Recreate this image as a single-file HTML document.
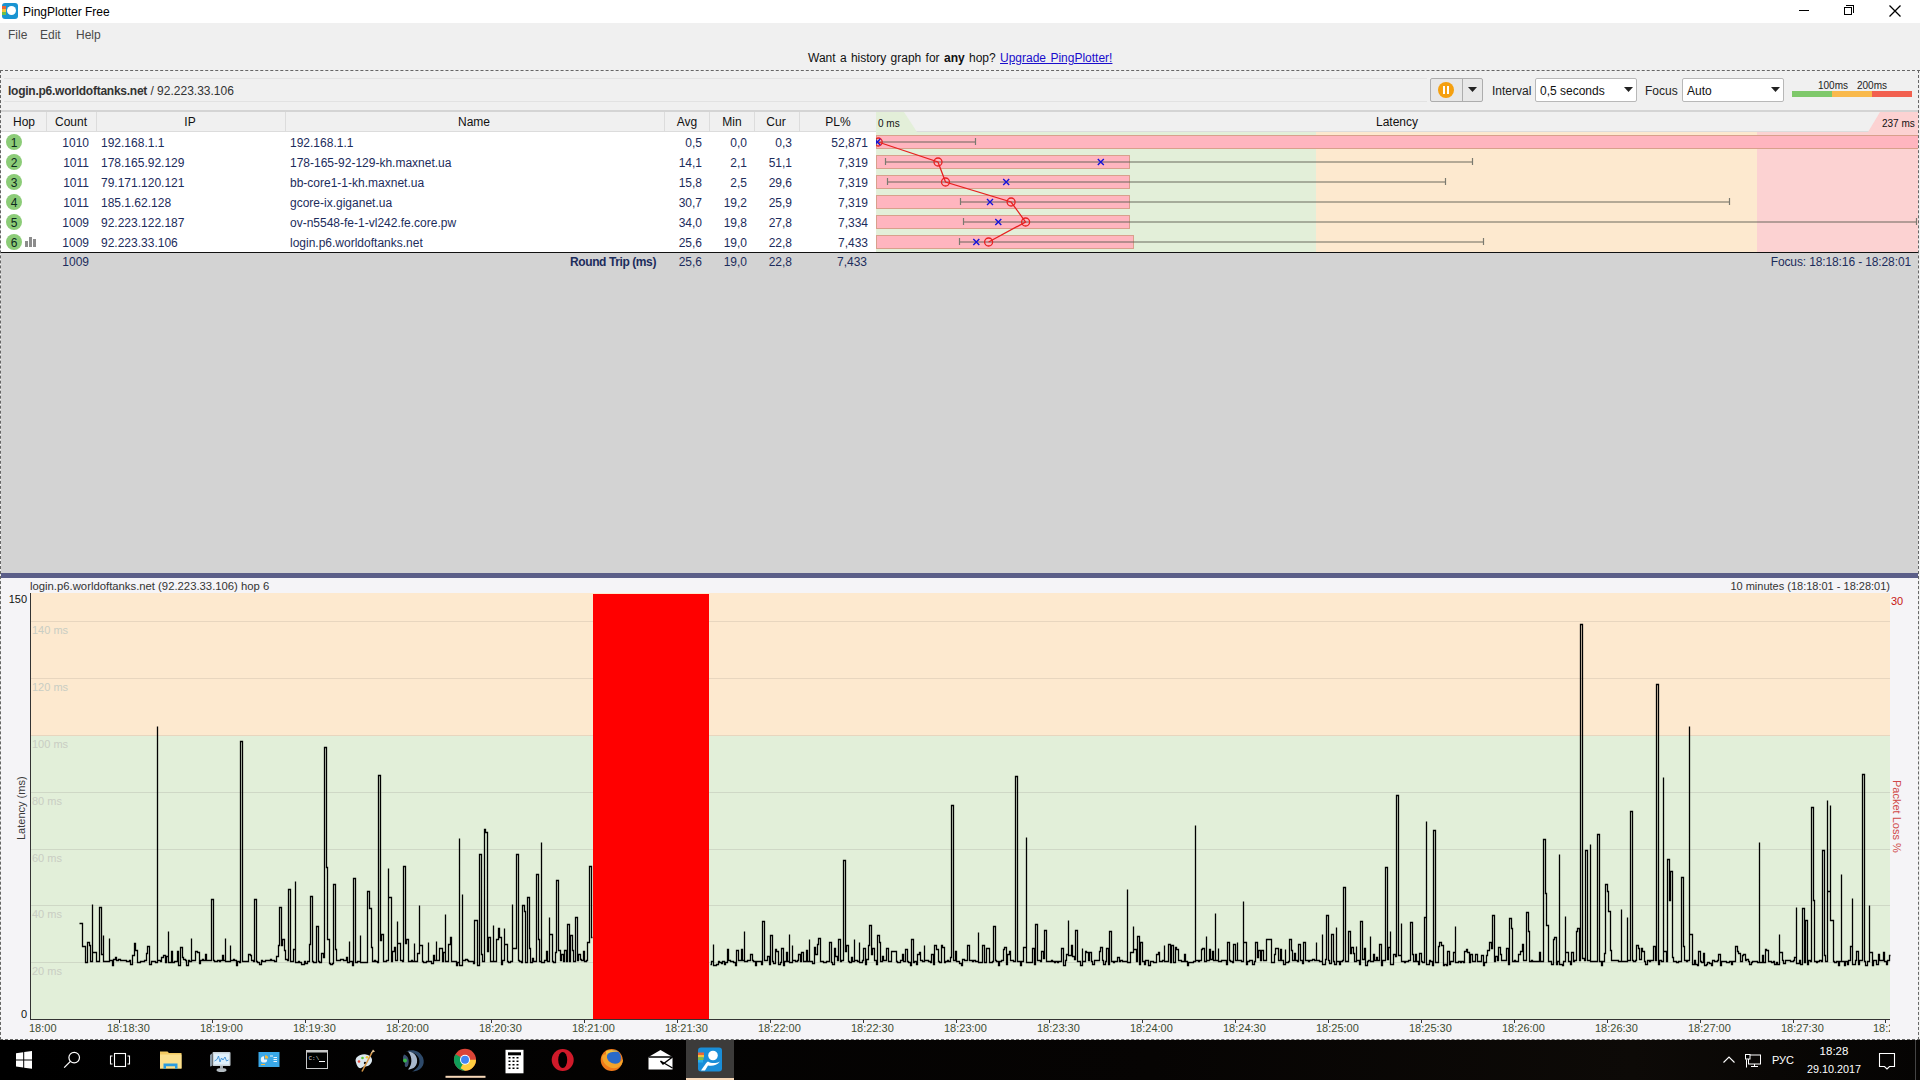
<!DOCTYPE html><html><head><meta charset="utf-8"><style>
*{margin:0;padding:0;box-sizing:border-box}
html,body{width:1920px;height:1080px;overflow:hidden;background:#f0f0f0;font-family:"Liberation Sans",sans-serif;font-size:12px;color:#000}
.a{position:absolute;white-space:nowrap}
.t{position:absolute;white-space:nowrap;line-height:14px}
.nv{color:#1c2c5c}
.r{text-align:right}
.c{text-align:center}
</style></head><body><div class="a" style="left:0;top:0;width:1920px;height:23px;background:#fff"></div><div class="a" style="left:2px;top:3px;width:16px;height:16px;border-radius:3px;background:#1a94d2;overflow:hidden"><div class="a" style="left:0;top:3px;width:4px;height:3px;background:#e8663a"></div><div class="a" style="left:0;top:6px;width:4px;height:3px;background:#f6c43a"></div><div class="a" style="left:0;top:9px;width:4px;height:3px;background:#6cbf4a"></div><div class="a" style="left:5px;top:3px;width:9px;height:9px;border-radius:50%;background:#fff"></div></div><div class="t" style="left:23px;top:5px;font-size:12px;color:#000">PingPlotter Free</div><div class="a" style="left:1799px;top:10px;width:10px;height:1px;background:#000"></div><div class="a" style="left:1844px;top:7px;width:8px;height:8px;border:1px solid #000;background:#fff"></div><div class="a" style="left:1846px;top:5px;width:8px;height:8px;border-top:1px solid #000;border-right:1px solid #000"></div><svg class="a" style="left:1889px;top:5px" width="12" height="12"><path d="M0.5 0.5L11.5 11.5M11.5 0.5L0.5 11.5" stroke="#000" stroke-width="1.3"/></svg><div class="t" style="left:8px;top:28px;color:#4a4a4a">File</div><div class="t" style="left:40px;top:28px;color:#4a4a4a">Edit</div><div class="t" style="left:76px;top:28px;color:#4a4a4a">Help</div><div class="t" style="left:808px;top:51px;color:#111;word-spacing:1px">Want a history graph for <b>any</b> hop? <span style="color:#1a0dcc;text-decoration:underline">Upgrade PingPlotter!</span></div><div class="a" style="left:0;top:70px;width:1920px;height:1px;border-top:1px dashed #666"></div><div class="a" style="left:0;top:70px;width:1px;height:970px;border-left:1px dashed #666"></div><div class="a" style="left:1918px;top:70px;width:1px;height:970px;border-left:1px dashed #666"></div><div class="a" style="left:4px;top:78px;width:1423px;height:24px;border-top:1px solid #e2e2e2;border-bottom:1px solid #e2e2e2"></div><div class="t" style="left:8px;top:84px;color:#333"><b style="letter-spacing:-0.25px">login.p6.worldoftanks.net</b> / 92.223.33.106</div><div class="a" style="left:1430px;top:78px;width:53px;height:24px;border:1px solid #adadad;border-radius:2px;background:#e8e8e8"></div><div class="a" style="left:1462px;top:79px;width:1px;height:22px;background:#adadad"></div><div class="a" style="left:1438px;top:82px;width:16px;height:16px;border-radius:50%;background:#f5a00f"></div><div class="a" style="left:1443px;top:86px;width:2px;height:8px;background:#fff"></div><div class="a" style="left:1447px;top:86px;width:2px;height:8px;background:#fff"></div><svg class="a" style="left:1468px;top:87px" width="9" height="5"><path d="M0 0H9L4.5 5Z" fill="#222"/></svg><div class="t" style="left:1492px;top:84px;color:#222">Interval</div><div class="a" style="left:1535px;top:78px;width:102px;height:24px;border:1px solid #b8b8b8;border-radius:2px;background:#fff"></div><div class="t" style="left:1540px;top:84px;color:#111">0,5 seconds</div><svg class="a" style="left:1624px;top:87px" width="9" height="5"><path d="M0 0H9L4.5 5Z" fill="#222"/></svg><div class="t" style="left:1645px;top:84px;color:#222">Focus</div><div class="a" style="left:1682px;top:78px;width:102px;height:24px;border:1px solid #b8b8b8;border-radius:2px;background:#fff"></div><div class="t" style="left:1687px;top:84px;color:#111">Auto</div><div class="a" style="left:1771px;top:87px;width:0;height:0"></div><svg class="a" style="left:1771px;top:87px" width="9" height="5"><path d="M0 0H9L4.5 5Z" fill="#222"/></svg><div class="t" style="left:1818px;top:79px;font-size:10px;color:#222">100ms</div><div class="t" style="left:1857px;top:79px;font-size:10px;color:#222">200ms</div><div class="a" style="left:1792px;top:91px;width:40px;height:6px;background:#7ec86a"></div><div class="a" style="left:1832px;top:91px;width:40px;height:6px;background:#f9b94c"></div><div class="a" style="left:1872px;top:91px;width:40px;height:6px;background:#f2604f"></div><div class="a" style="left:1px;top:110px;width:1917px;height:2px;background:#d4d4d4"></div><div class="a" style="left:1px;top:112px;width:1917px;height:20px;background:#f0f0f0;border-bottom:1px solid #dcdcdc"></div><div class="a" style="left:46px;top:112px;width:1px;height:19px;background:#dcdcdc"></div><div class="a" style="left:96px;top:112px;width:1px;height:19px;background:#dcdcdc"></div><div class="a" style="left:285px;top:112px;width:1px;height:19px;background:#dcdcdc"></div><div class="a" style="left:664px;top:112px;width:1px;height:19px;background:#dcdcdc"></div><div class="a" style="left:709px;top:112px;width:1px;height:19px;background:#dcdcdc"></div><div class="a" style="left:754px;top:112px;width:1px;height:19px;background:#dcdcdc"></div><div class="a" style="left:799px;top:112px;width:1px;height:19px;background:#dcdcdc"></div><div class="t" style="left:13px;top:115px;color:#111">Hop</div><div class="t" style="left:55px;top:115px;color:#111">Count</div><div class="t c" style="left:90px;top:115px;width:200px;color:#111">IP</div><div class="t c" style="left:374px;top:115px;width:200px;color:#111">Name</div><div class="t c" style="left:587px;top:115px;width:200px;color:#111">Avg</div><div class="t c" style="left:632px;top:115px;width:200px;color:#111">Min</div><div class="t c" style="left:676px;top:115px;width:200px;color:#111">Cur</div><div class="t c" style="left:738px;top:115px;width:200px;color:#111">PL%</div><div class="t c" style="left:1297px;top:115px;width:200px;color:#111">Latency</div><div class="a" style="left:1px;top:132px;width:875px;height:120px;background:#fff"></div><div class="a" style="left:6px;top:134px;width:16px;height:16px;border-radius:50%;background:#8ccc78"></div><div class="t c" style="left:6px;top:136px;width:16px;color:#0d2a1d">1</div><div class="t r nv" style="left:40px;top:136px;width:49px">1010</div><div class="t nv" style="left:101px;top:136px">192.168.1.1</div><div class="t nv" style="left:290px;top:136px">192.168.1.1</div><div class="t r nv" style="left:622px;top:136px;width:80px">0,5</div><div class="t r nv" style="left:667px;top:136px;width:80px">0,0</div><div class="t r nv" style="left:712px;top:136px;width:80px">0,3</div><div class="t r nv" style="left:788px;top:136px;width:80px">52,871</div><div class="a" style="left:6px;top:154px;width:16px;height:16px;border-radius:50%;background:#8ccc78"></div><div class="t c" style="left:6px;top:156px;width:16px;color:#0d2a1d">2</div><div class="t r nv" style="left:40px;top:156px;width:49px">1011</div><div class="t nv" style="left:101px;top:156px">178.165.92.129</div><div class="t nv" style="left:290px;top:156px">178-165-92-129-kh.maxnet.ua</div><div class="t r nv" style="left:622px;top:156px;width:80px">14,1</div><div class="t r nv" style="left:667px;top:156px;width:80px">2,1</div><div class="t r nv" style="left:712px;top:156px;width:80px">51,1</div><div class="t r nv" style="left:788px;top:156px;width:80px">7,319</div><div class="a" style="left:6px;top:174px;width:16px;height:16px;border-radius:50%;background:#8ccc78"></div><div class="t c" style="left:6px;top:176px;width:16px;color:#0d2a1d">3</div><div class="t r nv" style="left:40px;top:176px;width:49px">1011</div><div class="t nv" style="left:101px;top:176px">79.171.120.121</div><div class="t nv" style="left:290px;top:176px">bb-core1-1-kh.maxnet.ua</div><div class="t r nv" style="left:622px;top:176px;width:80px">15,8</div><div class="t r nv" style="left:667px;top:176px;width:80px">2,5</div><div class="t r nv" style="left:712px;top:176px;width:80px">29,6</div><div class="t r nv" style="left:788px;top:176px;width:80px">7,319</div><div class="a" style="left:6px;top:194px;width:16px;height:16px;border-radius:50%;background:#8ccc78"></div><div class="t c" style="left:6px;top:196px;width:16px;color:#0d2a1d">4</div><div class="t r nv" style="left:40px;top:196px;width:49px">1011</div><div class="t nv" style="left:101px;top:196px">185.1.62.128</div><div class="t nv" style="left:290px;top:196px">gcore-ix.giganet.ua</div><div class="t r nv" style="left:622px;top:196px;width:80px">30,7</div><div class="t r nv" style="left:667px;top:196px;width:80px">19,2</div><div class="t r nv" style="left:712px;top:196px;width:80px">25,9</div><div class="t r nv" style="left:788px;top:196px;width:80px">7,319</div><div class="a" style="left:6px;top:214px;width:16px;height:16px;border-radius:50%;background:#8ccc78"></div><div class="t c" style="left:6px;top:216px;width:16px;color:#0d2a1d">5</div><div class="t r nv" style="left:40px;top:216px;width:49px">1009</div><div class="t nv" style="left:101px;top:216px">92.223.122.187</div><div class="t nv" style="left:290px;top:216px">ov-n5548-fe-1-vl242.fe.core.pw</div><div class="t r nv" style="left:622px;top:216px;width:80px">34,0</div><div class="t r nv" style="left:667px;top:216px;width:80px">19,8</div><div class="t r nv" style="left:712px;top:216px;width:80px">27,8</div><div class="t r nv" style="left:788px;top:216px;width:80px">7,334</div><div class="a" style="left:6px;top:234px;width:16px;height:16px;border-radius:50%;background:#8ccc78"></div><div class="t c" style="left:6px;top:236px;width:16px;color:#0d2a1d">6</div><div class="t r nv" style="left:40px;top:236px;width:49px">1009</div><div class="t nv" style="left:101px;top:236px">92.223.33.106</div><div class="t nv" style="left:290px;top:236px">login.p6.worldoftanks.net</div><div class="t r nv" style="left:622px;top:236px;width:80px">25,6</div><div class="t r nv" style="left:667px;top:236px;width:80px">19,0</div><div class="t r nv" style="left:712px;top:236px;width:80px">22,8</div><div class="t r nv" style="left:788px;top:236px;width:80px">7,433</div><div class="a" style="left:25px;top:241px;width:3px;height:6px;background:#8c8c8c"></div><div class="a" style="left:29px;top:237px;width:3px;height:10px;background:#8c8c8c"></div><div class="a" style="left:33px;top:239px;width:3px;height:8px;background:#8c8c8c"></div><svg class="a" style="left:0;top:0" width="1920" height="280"><defs><clipPath id="lc"><rect x="876" y="112" width="1042" height="140"/></clipPath></defs><g clip-path="url(#lc)"><polygon points="876,112 904,112 917,132 876,132" fill="#e3efd9"/><polygon points="1880,112 1918,112 1918,132 1868,132" fill="#fcd2d2"/><rect x="876" y="132" width="440" height="120" fill="#e3efd9"/><rect x="1316" y="132" width="441" height="120" fill="#fde9cf"/><rect x="1757" y="132" width="161" height="120" fill="#fcd2d2"/><rect x="876.5" y="135.5" width="1045" height="13" fill="#ffb5bf" stroke="#d8a08c" stroke-width="1"/><rect x="876.5" y="155.5" width="253" height="13" fill="#ffb5bf" stroke="#d8a08c" stroke-width="1"/><rect x="876.5" y="175.5" width="253" height="13" fill="#ffb5bf" stroke="#d8a08c" stroke-width="1"/><rect x="876.5" y="195.5" width="253" height="13" fill="#ffb5bf" stroke="#d8a08c" stroke-width="1"/><rect x="876.5" y="215.5" width="253" height="13" fill="#ffb5bf" stroke="#d8a08c" stroke-width="1"/><rect x="876.5" y="235.5" width="257" height="13" fill="#ffb5bf" stroke="#d8a08c" stroke-width="1"/><line x1="876.0" y1="142.0" x2="975.9" y2="142.0" stroke="#5a5a50" stroke-opacity="0.45" stroke-width="2"/><line x1="876.5" y1="138.0" x2="876.5" y2="145.0" stroke="#7a7a70" stroke-width="1.2"/><line x1="975.5" y1="138.0" x2="975.5" y2="145.0" stroke="#7a7a70" stroke-width="1.2"/><line x1="885.2" y1="162.0" x2="1472.2" y2="162.0" stroke="#5a5a50" stroke-opacity="0.45" stroke-width="2"/><line x1="885.5" y1="158.0" x2="885.5" y2="165.0" stroke="#7a7a70" stroke-width="1.2"/><line x1="1472.5" y1="158.0" x2="1472.5" y2="165.0" stroke="#7a7a70" stroke-width="1.2"/><line x1="887.0" y1="182.0" x2="1445.8" y2="182.0" stroke="#5a5a50" stroke-opacity="0.45" stroke-width="2"/><line x1="887.5" y1="178.0" x2="887.5" y2="185.0" stroke="#7a7a70" stroke-width="1.2"/><line x1="1445.5" y1="178.0" x2="1445.5" y2="185.0" stroke="#7a7a70" stroke-width="1.2"/><line x1="960.5" y1="202.0" x2="1729.6" y2="202.0" stroke="#5a5a50" stroke-opacity="0.45" stroke-width="2"/><line x1="960.5" y1="198.0" x2="960.5" y2="205.0" stroke="#7a7a70" stroke-width="1.2"/><line x1="1729.5" y1="198.0" x2="1729.5" y2="205.0" stroke="#7a7a70" stroke-width="1.2"/><line x1="963.1" y1="222.0" x2="1916.6" y2="222.0" stroke="#5a5a50" stroke-opacity="0.45" stroke-width="2"/><line x1="963.5" y1="218.0" x2="963.5" y2="225.0" stroke="#7a7a70" stroke-width="1.2"/><line x1="1916.5" y1="218.0" x2="1916.5" y2="225.0" stroke="#7a7a70" stroke-width="1.2"/><line x1="959.6" y1="242.0" x2="1483.2" y2="242.0" stroke="#5a5a50" stroke-opacity="0.45" stroke-width="2"/><line x1="959.5" y1="238.0" x2="959.5" y2="245.0" stroke="#7a7a70" stroke-width="1.2"/><line x1="1483.5" y1="238.0" x2="1483.5" y2="245.0" stroke="#7a7a70" stroke-width="1.2"/><polyline points="878.2,142.0 938.0,162.0 945.5,182.0 1011.1,202.0 1025.6,222.0 988.6,242.0" fill="none" stroke="#e82020" stroke-width="1.3"/><circle cx="878.2" cy="142" r="4" fill="none" stroke="#e82020" stroke-width="1.3"/><circle cx="938.0" cy="162" r="4" fill="none" stroke="#e82020" stroke-width="1.3"/><circle cx="945.5" cy="182" r="4" fill="none" stroke="#e82020" stroke-width="1.3"/><circle cx="1011.1" cy="202" r="4" fill="none" stroke="#e82020" stroke-width="1.3"/><circle cx="1025.6" cy="222" r="4" fill="none" stroke="#e82020" stroke-width="1.3"/><circle cx="988.6" cy="242" r="4" fill="none" stroke="#e82020" stroke-width="1.3"/><path d="M874.3 139.0L880.3 145.0M880.3 139.0L874.3 145.0" stroke="#1414d8" stroke-width="1.4"/><path d="M1097.8 159.0L1103.8 165.0M1103.8 159.0L1097.8 165.0" stroke="#1414d8" stroke-width="1.4"/><path d="M1003.2 179.0L1009.2 185.0M1009.2 179.0L1003.2 185.0" stroke="#1414d8" stroke-width="1.4"/><path d="M987.0 199.0L993.0 205.0M993.0 199.0L987.0 205.0" stroke="#1414d8" stroke-width="1.4"/><path d="M995.3 219.0L1001.3 225.0M1001.3 219.0L995.3 225.0" stroke="#1414d8" stroke-width="1.4"/><path d="M973.3 239.0L979.3 245.0M979.3 239.0L973.3 245.0" stroke="#1414d8" stroke-width="1.4"/></g></svg><div class="t" style="left:878px;top:117px;font-size:10px;color:#111">0 ms</div><div class="t" style="left:1882px;top:117px;font-size:10px;color:#111">237 ms</div><div class="a" style="left:1px;top:252px;width:1917px;height:321px;background:#d3d3d3;border-top:1px solid #111"></div><div class="t r" style="left:40px;top:255px;width:49px;color:#1c2c5c">1009</div><div class="t r" style="left:456px;top:255px;width:200px;color:#1c2c5c"><b style="letter-spacing:-0.4px">Round Trip (ms)</b></div><div class="t r nv" style="left:622px;top:255px;width:80px">25,6</div><div class="t r nv" style="left:667px;top:255px;width:80px">19,0</div><div class="t r nv" style="left:712px;top:255px;width:80px">22,8</div><div class="t r nv" style="left:787px;top:255px;width:80px">7,433</div><div class="t r nv" style="left:1600px;top:255px;width:311px;letter-spacing:-0.12px">Focus: 18:18:16 - 18:28:01</div><div class="a" style="left:1px;top:573px;width:1917px;height:5px;background:#5b5e88"></div><div class="a" style="left:1px;top:578px;width:1917px;height:461px;background:#f5f4f7"></div><div class="t" style="left:30px;top:579px;font-size:11.3px;color:#333">login.p6.worldoftanks.net (92.223.33.106) hop 6</div><div class="t r" style="left:1590px;top:579px;width:300px;font-size:11px;color:#333">10 minutes (18:18:01 - 18:28:01)</div><svg class="a" style="left:0;top:0" width="1920" height="1040"><rect x="31" y="593" width="1859" height="142.0" fill="#fde9cf"/><rect x="31" y="735.0" width="1859" height="284.0" fill="#e2efd9"/><line x1="31" y1="962.5" x2="1890" y2="962.5" stroke="#cfd8c6" stroke-width="1"/><text x="32" y="974.5" font-family="Liberation Sans" font-size="11" fill="#c9cdc3">20 ms</text><line x1="31" y1="905.5" x2="1890" y2="905.5" stroke="#cfd8c6" stroke-width="1"/><text x="32" y="917.5" font-family="Liberation Sans" font-size="11" fill="#c9cdc3">40 ms</text><line x1="31" y1="849.5" x2="1890" y2="849.5" stroke="#cfd8c6" stroke-width="1"/><text x="32" y="861.5" font-family="Liberation Sans" font-size="11" fill="#c9cdc3">60 ms</text><line x1="31" y1="792.5" x2="1890" y2="792.5" stroke="#cfd8c6" stroke-width="1"/><text x="32" y="804.5" font-family="Liberation Sans" font-size="11" fill="#c9cdc3">80 ms</text><line x1="31" y1="735.5" x2="1890" y2="735.5" stroke="#e8d6bf" stroke-width="1"/><text x="32" y="747.5" font-family="Liberation Sans" font-size="11" fill="#c9cdc3">100 ms</text><line x1="31" y1="678.5" x2="1890" y2="678.5" stroke="#e8d6bf" stroke-width="1"/><text x="32" y="690.5" font-family="Liberation Sans" font-size="11" fill="#c9cdc3">120 ms</text><line x1="31" y1="621.5" x2="1890" y2="621.5" stroke="#e8d6bf" stroke-width="1"/><text x="32" y="633.5" font-family="Liberation Sans" font-size="11" fill="#c9cdc3">140 ms</text><line x1="30.5" y1="593" x2="30.5" y2="1020" stroke="#333" stroke-width="1"/><line x1="30" y1="1019.5" x2="1890" y2="1019.5" stroke="#333" stroke-width="1"/><rect x="593" y="594" width="116" height="425" fill="#ff0000"/><path d="M79.5 923.5H81.5H82.5V946.5H84.5H85.5V962.5H87.5V942.5H89.5V945.5H90.5V961.5H92.5V904.5V952.5H95.5H96.5V961.5H98.5H99.5V907.5H101.5V954.5H103.5V935.5V961.5H106.5H107.5H109.5V938.5V960.5H112.5V965.5H113.5V959.5H115.5V957.5H116.5V960.5H118.5V959.5H120.5V960.5H121.5H123.5H124.5H126.5V961.5H127.5H129.5V960.5H130.5V964.5H132.5V955.5H134.5V943.5H135.5V950.5H137.5V962.5H138.5H140.5V961.5H141.5H143.5H144.5V960.5H146.5V953.5H147.5V946.5H149.5V964.5H151.5V961.5H152.5H154.5H155.5V962.5H157.5V726.5V960.5H160.5V961.5H161.5V957.5H163.5V955.5H165.5V962.5H166.5V956.5H168.5V931.5V962.5H171.5V951.5H172.5V962.5H174.5V961.5H175.5H177.5V951.5H178.5V965.5H180.5V947.5H182.5V957.5H183.5V959.5H185.5V960.5H186.5V965.5H188.5V960.5H189.5V961.5H191.5V938.5V960.5H194.5H195.5V951.5H197.5V952.5H199.5V963.5H200.5V960.5H202.5V959.5H203.5V960.5H205.5V954.5H206.5V960.5H208.5H209.5H211.5V899.5H213.5V960.5H214.5V961.5H216.5H217.5V960.5H219.5V961.5H220.5V960.5H222.5V955.5H223.5V960.5H225.5V938.5V961.5H228.5H230.5V945.5V960.5H233.5V959.5H234.5V960.5H236.5V965.5H237.5V961.5H239.5V962.5H240.5V741.5H242.5V961.5H244.5H245.5H247.5H248.5V954.5H250.5V955.5H251.5V960.5H253.5V961.5H254.5V899.5H256.5V961.5H257.5V962.5H259.5V964.5H261.5V960.5H262.5V961.5H264.5H265.5V960.5H267.5H268.5H270.5V959.5H271.5V960.5H273.5H274.5V961.5H276.5V956.5H278.5V945.5H279.5V907.5H281.5V945.5H282.5V939.5H284.5V950.5H285.5V959.5H287.5V960.5H288.5V889.5H290.5V961.5H292.5H293.5V949.5H295.5V881.5V962.5H298.5V961.5H299.5V962.5H301.5V964.5H302.5H304.5V961.5H305.5V963.5H307.5V961.5H309.5V944.5H310.5V896.5H312.5V961.5H313.5V962.5H315.5H316.5V926.5H318.5V961.5H319.5V962.5H321.5V953.5H323.5V957.5H324.5V747.5H326.5V867.5H327.5V939.5H329.5V963.5H330.5V964.5H332.5V963.5H333.5V884.5H335.5V949.5H336.5V960.5H338.5H340.5V959.5H341.5H343.5V960.5H344.5H346.5V957.5H347.5V962.5H349.5V941.5V961.5H352.5V965.5H353.5V878.5H355.5V962.5H357.5V961.5H358.5H360.5V935.5V962.5H363.5H364.5H366.5H367.5V891.5H369.5V908.5H371.5V947.5H372.5V961.5H374.5V960.5H375.5V961.5H377.5V962.5H378.5V775.5H380.5V940.5H381.5V934.5H383.5V961.5H384.5H386.5V960.5H388.5V868.5V897.5H391.5V961.5H392.5V951.5H394.5V947.5H395.5V960.5H397.5V921.5V943.5H400.5V960.5H402.5V961.5H403.5V866.5H405.5V943.5H406.5V939.5H408.5V961.5H409.5H411.5V960.5H412.5V961.5H414.5V943.5V961.5H417.5V953.5H419.5V905.5V945.5H422.5V961.5H423.5V962.5H425.5H426.5V961.5H428.5V942.5V961.5H431.5V963.5H433.5V955.5H434.5V960.5H436.5V941.5V960.5H439.5V948.5H440.5H442.5V961.5H443.5V952.5H445.5V914.5V961.5H448.5V944.5H450.5V937.5H451.5V961.5H453.5H454.5H456.5V965.5H457.5V962.5H459.5V838.5V965.5H462.5V894.5V960.5H465.5V959.5H467.5V960.5H468.5V961.5H470.5H471.5H473.5V963.5H474.5V920.5H476.5H477.5V965.5H479.5V854.5H481.5V954.5H482.5V961.5H484.5V829.5H485.5V832.5H487.5V951.5H488.5V937.5H490.5V961.5H491.5H493.5V925.5V961.5H496.5V939.5H498.5V928.5H499.5V937.5H501.5V964.5H502.5V960.5H504.5V928.5V944.5H507.5V961.5H508.5V962.5H510.5V961.5H512.5V904.5V948.5H515.5H516.5V854.5H518.5V960.5H519.5V961.5H521.5V962.5H522.5V905.5H524.5V911.5H525.5V962.5H527.5V897.5H529.5V948.5H530.5V962.5H532.5V958.5H533.5V961.5H535.5H536.5V874.5H538.5V939.5H539.5V961.5H541.5V842.5V962.5H544.5V960.5H546.5V951.5H547.5V961.5H549.5V917.5V934.5H552.5V961.5H553.5V962.5H555.5V952.5H556.5V880.5H558.5V950.5H560.5V960.5H561.5V954.5H563.5V961.5H564.5V950.5H566.5V961.5H567.5V924.5H569.5V961.5H570.5V935.5H572.5V950.5H573.5V961.5H575.5V917.5H577.5V960.5H578.5V954.5H580.5V959.5H581.5V960.5H583.5V951.5H584.5V961.5H586.5V960.5H587.5V942.5H589.5V866.5H591.5V937.5H592.5M710.5 964.5H711.5V961.5H713.5V944.5V965.5H716.5V964.5H718.5V961.5H719.5V962.5H721.5V963.5H722.5V961.5H724.5V964.5H725.5V962.5H727.5V949.5H728.5V960.5H730.5V961.5H731.5H733.5V962.5H735.5V965.5H736.5V950.5H738.5V960.5H739.5H741.5V949.5H742.5V960.5H744.5V931.5V961.5H747.5V960.5H749.5H750.5V954.5H752.5V960.5H753.5V961.5H755.5V965.5H756.5V961.5H758.5H759.5H761.5V964.5H762.5V921.5H764.5V960.5H766.5H767.5V956.5H769.5V964.5H770.5V935.5H772.5V961.5H773.5V963.5H775.5V949.5H776.5V951.5H778.5V964.5H780.5V962.5H781.5V948.5H783.5V965.5H784.5V961.5H786.5V952.5H787.5V961.5H789.5V934.5V962.5H792.5V945.5V960.5H795.5V961.5H797.5V960.5H798.5V954.5H800.5V961.5H801.5V952.5H803.5V961.5H804.5H806.5V950.5H807.5V961.5H809.5V939.5V961.5H812.5V963.5H814.5V947.5H815.5V954.5H817.5V944.5H818.5V938.5H820.5V961.5H821.5H823.5V962.5H824.5H826.5V961.5H828.5H829.5V942.5H831.5V962.5H832.5V964.5H834.5V948.5H835.5V956.5H837.5V960.5H838.5V939.5H840.5V961.5H841.5V960.5H843.5V860.5H845.5V951.5H846.5V945.5H848.5V961.5H849.5V962.5H851.5V957.5H852.5V961.5H854.5V939.5V960.5H857.5V961.5H859.5V942.5V962.5H862.5V960.5H863.5V948.5H865.5V964.5H866.5V959.5H868.5V945.5H869.5V925.5H871.5V954.5H872.5V948.5H874.5V960.5H876.5V964.5H877.5V935.5H879.5V942.5H880.5V961.5H882.5V956.5H883.5V960.5H885.5H886.5V948.5H888.5V961.5H890.5H891.5V951.5H893.5H894.5H896.5V961.5H897.5V962.5H899.5H900.5V960.5H902.5V954.5H903.5V961.5H905.5V949.5H907.5V961.5H908.5V962.5H910.5V965.5H911.5V939.5H913.5V962.5H914.5V961.5H916.5V964.5H917.5V954.5H919.5V952.5H920.5V960.5H922.5V961.5H924.5V945.5V960.5H927.5H928.5V961.5H930.5V962.5H931.5V954.5H933.5V964.5H934.5V945.5H936.5V949.5H938.5V961.5H939.5V962.5H941.5V945.5H942.5V947.5H944.5V962.5H945.5V961.5H947.5V960.5H948.5V961.5H950.5V957.5H951.5V805.5H953.5V960.5H955.5V951.5H956.5V961.5H958.5H959.5V963.5H961.5V965.5H962.5V959.5H964.5V960.5H965.5H967.5V945.5H969.5V960.5H970.5H972.5V961.5H973.5V960.5H975.5V961.5H976.5H978.5V932.5V962.5H981.5H982.5V945.5H984.5V962.5H986.5V948.5H987.5H989.5V962.5H990.5H992.5V961.5H993.5V926.5H995.5V960.5H996.5V961.5H998.5V965.5H999.5V961.5H1001.5V960.5H1003.5V949.5H1004.5V947.5H1006.5V964.5H1007.5V954.5H1009.5V951.5H1010.5V960.5H1012.5H1013.5V961.5H1015.5V776.5H1017.5V961.5H1018.5H1020.5V965.5H1021.5V961.5H1023.5V947.5H1024.5H1026.5V837.5V962.5H1029.5H1030.5H1032.5V948.5H1034.5V964.5H1035.5V924.5H1037.5V960.5H1038.5H1040.5V961.5H1041.5V951.5H1043.5V958.5H1044.5V930.5H1046.5V961.5H1048.5H1049.5H1051.5V960.5H1052.5V961.5H1054.5V962.5H1055.5V961.5H1057.5V962.5H1058.5V961.5H1060.5H1061.5V948.5H1063.5V965.5H1065.5V960.5H1066.5V954.5H1068.5V920.5V955.5H1071.5V945.5H1072.5V956.5H1074.5V959.5H1075.5V930.5H1077.5V961.5H1079.5H1080.5V965.5H1082.5V948.5V961.5H1085.5V951.5H1086.5V952.5H1088.5V960.5H1089.5V952.5H1091.5V961.5H1092.5V964.5H1094.5V960.5H1096.5H1097.5H1099.5V951.5H1100.5V947.5H1102.5V960.5H1103.5V964.5H1105.5V961.5H1106.5V948.5H1108.5V964.5H1109.5V931.5H1111.5V961.5H1113.5V962.5H1114.5V961.5H1116.5H1117.5V957.5H1119.5V961.5H1120.5V960.5H1122.5V961.5H1123.5H1125.5H1127.5V889.5V962.5H1130.5V952.5H1131.5H1133.5V926.5V949.5H1136.5V961.5H1137.5V936.5H1139.5V964.5H1140.5V942.5H1142.5V961.5H1144.5V964.5H1145.5V960.5H1147.5H1148.5V965.5H1150.5V961.5H1151.5H1153.5V962.5H1154.5H1156.5V954.5H1158.5V952.5H1159.5V961.5H1161.5H1162.5V960.5H1164.5V945.5V961.5H1167.5H1168.5V944.5H1170.5V962.5H1171.5V945.5H1173.5V962.5H1175.5V947.5H1176.5V949.5H1178.5V960.5H1179.5H1181.5V961.5H1182.5H1184.5V954.5H1185.5V961.5H1187.5V965.5H1188.5V962.5H1190.5H1192.5H1193.5V961.5H1195.5V825.5V960.5H1198.5V961.5H1199.5V960.5H1201.5V949.5H1202.5V948.5H1204.5V961.5H1206.5V936.5V960.5H1209.5V949.5H1210.5V959.5H1212.5V951.5H1213.5V960.5H1215.5V913.5V960.5H1218.5V948.5V961.5H1221.5V960.5H1223.5H1224.5H1226.5V964.5H1227.5V942.5H1229.5V960.5H1230.5V961.5H1232.5V962.5H1233.5V944.5H1235.5V960.5H1237.5V942.5V960.5H1240.5H1241.5V961.5H1243.5V901.5V942.5H1246.5V964.5H1247.5V961.5H1249.5V960.5H1250.5H1252.5V964.5H1254.5V961.5H1255.5V942.5H1257.5V957.5H1258.5V950.5H1260.5V960.5H1261.5V950.5H1263.5V960.5H1264.5H1266.5V939.5H1267.5H1269.5H1271.5V962.5H1272.5H1274.5V954.5H1275.5V948.5H1277.5H1278.5V960.5H1280.5V949.5H1281.5V960.5H1283.5V964.5H1285.5V949.5V962.5H1288.5V961.5H1289.5V939.5H1291.5V950.5H1292.5V960.5H1294.5V953.5H1295.5V960.5H1297.5V961.5H1298.5V944.5H1300.5V960.5H1302.5V963.5H1303.5V942.5H1305.5V960.5H1306.5H1308.5V961.5H1309.5V960.5H1311.5H1312.5V959.5H1314.5V960.5H1316.5V942.5V960.5H1319.5V961.5H1320.5H1322.5V934.5V964.5H1325.5V959.5H1326.5V915.5H1328.5V960.5H1329.5V963.5H1331.5V934.5H1333.5V961.5H1334.5V964.5H1336.5V927.5V961.5H1339.5V964.5H1340.5V961.5H1342.5V960.5H1343.5V887.5H1345.5V961.5H1347.5H1348.5V931.5H1350.5V953.5H1351.5V947.5H1353.5V953.5H1354.5V961.5H1356.5V946.5V960.5H1359.5V964.5H1360.5V921.5H1362.5V959.5H1364.5V948.5H1365.5V965.5H1367.5V961.5H1368.5V960.5H1370.5V936.5V961.5H1373.5V954.5H1374.5V960.5H1376.5V957.5H1377.5V960.5H1379.5V944.5H1381.5V965.5H1382.5V960.5H1384.5H1385.5V867.5H1387.5V959.5H1388.5V947.5H1390.5V931.5V964.5H1393.5V954.5H1395.5V956.5H1396.5V795.5H1398.5V955.5H1399.5H1401.5V923.5V961.5H1404.5V962.5H1405.5V961.5H1407.5H1408.5V960.5H1410.5V922.5H1412.5V954.5H1413.5V961.5H1415.5V954.5H1416.5V961.5H1418.5V964.5H1419.5V953.5H1421.5V961.5H1422.5V962.5H1424.5V917.5H1426.5V821.5V964.5H1429.5V960.5H1430.5V961.5H1432.5V965.5H1433.5V830.5H1435.5V962.5H1436.5H1438.5V946.5H1439.5V942.5H1441.5V945.5H1443.5V965.5H1444.5V964.5H1446.5V965.5H1447.5V951.5H1449.5V964.5H1450.5V961.5H1452.5H1453.5V952.5H1455.5V926.5V962.5H1458.5V961.5H1460.5V962.5H1461.5V961.5H1463.5V962.5H1464.5V951.5H1466.5V949.5H1467.5V952.5H1469.5V962.5H1470.5V954.5H1472.5V961.5H1474.5H1475.5V954.5H1477.5V961.5H1478.5H1480.5H1481.5V955.5H1483.5V965.5H1484.5V962.5H1486.5V955.5H1487.5V950.5H1489.5V942.5H1491.5V948.5H1492.5V915.5H1494.5V961.5H1495.5V956.5H1497.5V960.5H1498.5V947.5H1500.5V954.5H1501.5V960.5H1503.5H1505.5H1506.5V948.5H1508.5V964.5H1509.5V918.5H1511.5V928.5H1512.5V961.5H1514.5V960.5H1515.5V961.5H1517.5H1518.5V954.5H1520.5V951.5H1522.5V944.5H1523.5V960.5H1525.5H1526.5V912.5H1528.5V931.5H1529.5V961.5H1531.5V960.5H1532.5V961.5H1534.5H1536.5H1537.5H1539.5V952.5H1540.5V961.5H1542.5H1543.5V839.5H1545.5V893.5H1546.5V925.5H1548.5V961.5H1549.5H1551.5V964.5H1553.5V939.5H1554.5V937.5H1556.5V964.5H1557.5V961.5H1559.5V854.5V964.5H1562.5V965.5H1563.5V961.5H1565.5V916.5V952.5H1568.5V961.5H1570.5V964.5H1571.5V952.5H1573.5V961.5H1574.5V960.5H1576.5V931.5H1577.5V928.5H1579.5V960.5H1580.5V624.5H1582.5V958.5H1584.5V960.5H1585.5V850.5H1587.5V960.5H1588.5H1590.5V844.5V961.5H1593.5H1594.5H1596.5H1597.5V834.5H1599.5V961.5H1601.5V965.5H1602.5V961.5H1604.5V953.5H1605.5V884.5H1607.5V891.5H1608.5V911.5H1610.5V950.5H1611.5V960.5H1613.5H1615.5H1616.5H1618.5V961.5H1619.5H1621.5V909.5V961.5H1624.5H1625.5H1627.5V917.5V960.5H1630.5V811.5H1632.5V960.5H1633.5V961.5H1635.5V960.5H1636.5V945.5H1638.5V948.5H1639.5V959.5H1641.5V948.5H1642.5V951.5H1644.5V961.5H1645.5V964.5H1647.5V960.5H1649.5V961.5H1650.5V960.5H1652.5H1653.5V946.5H1655.5V960.5H1656.5V684.5H1658.5V964.5H1659.5V960.5H1661.5V961.5H1663.5V777.5V951.5H1666.5V961.5H1667.5V859.5H1669.5V900.5H1670.5V871.5H1672.5V957.5H1673.5V961.5H1675.5H1676.5V962.5H1678.5V961.5H1680.5H1681.5V877.5H1683.5V946.5H1684.5V960.5H1686.5V961.5H1687.5V960.5H1689.5V726.5V934.5H1692.5V964.5H1694.5V960.5H1695.5V964.5H1697.5V965.5H1698.5V951.5H1700.5V961.5H1701.5V962.5H1703.5V953.5H1704.5V965.5H1706.5V964.5H1707.5V962.5H1709.5V963.5H1711.5V965.5H1712.5V960.5H1714.5V961.5H1715.5H1717.5V960.5H1718.5V954.5H1720.5V965.5H1721.5V961.5H1723.5H1724.5H1726.5V962.5H1728.5H1729.5V961.5H1731.5V964.5H1732.5V961.5H1734.5H1735.5V946.5H1737.5V951.5H1738.5V953.5H1740.5V961.5H1742.5V955.5H1743.5V954.5H1745.5V960.5H1746.5V959.5H1748.5V961.5H1749.5V964.5H1751.5V962.5H1752.5V961.5H1754.5H1755.5H1757.5V962.5H1759.5V842.5V962.5H1762.5V955.5H1763.5V962.5H1765.5V949.5H1766.5V950.5H1768.5V961.5H1769.5H1771.5V962.5H1773.5V961.5H1774.5V964.5H1776.5V962.5H1777.5V964.5H1779.5V934.5V952.5H1782.5V960.5H1783.5V963.5H1785.5V960.5H1786.5H1788.5H1790.5V961.5H1791.5H1793.5V960.5H1794.5V957.5H1796.5V907.5V963.5H1799.5V960.5H1800.5V964.5H1802.5V908.5H1804.5V962.5H1805.5V920.5H1807.5V964.5H1808.5V960.5H1810.5V961.5H1811.5V807.5H1813.5V900.5H1814.5V961.5H1816.5V962.5H1817.5V961.5H1819.5V960.5H1821.5V961.5H1822.5V850.5H1824.5V955.5H1825.5V961.5H1827.5V800.5V891.5H1830.5V805.5V920.5H1833.5V961.5H1834.5V962.5H1836.5V961.5H1838.5V965.5H1839.5V961.5H1841.5V874.5V961.5H1844.5V965.5H1845.5V961.5H1847.5V964.5H1848.5V960.5H1850.5V946.5H1852.5V898.5V964.5H1855.5V960.5H1856.5V951.5H1858.5V964.5H1859.5V960.5H1861.5H1862.5V774.5H1864.5V961.5H1865.5V965.5H1867.5V961.5H1869.5V905.5V952.5H1872.5V965.5H1873.5V960.5H1875.5H1876.5V964.5H1878.5V954.5H1879.5V960.5H1881.5H1883.5V952.5H1884.5V961.5H1886.5V964.5H1887.5V960.5H1889.5V955.5H1890.5" fill="none" stroke="#000" stroke-width="1.3"/></svg><div class="t r" style="left:0;top:592px;width:27px;font-size:11px;color:#111">150</div><div class="t r" style="left:0;top:1007px;width:27px;font-size:11px;color:#111">0</div><div class="t" style="left:1891px;top:594px;font-size:11px;color:#c81414">30</div><div class="t" style="left:1890px;top:780px;font-size:11px;color:#d04848;transform-origin:0 0;transform:translate(14px,0) rotate(90deg)">Packet Loss %</div><div class="t" style="left:14px;top:840px;font-size:11px;color:#3a3a3a;transform-origin:0 0;transform:rotate(-90deg)">Latency (ms)</div><div class="t" style="left:29px;top:1021px;font-size:11px;color:#3d4d30">18:00</div><div class="a" style="left:119px;top:1019px;width:1px;height:4px;background:#333"></div><div class="t" style="left:107px;top:1021px;font-size:11px;color:#3d4d30">18:18:30</div><div class="a" style="left:212px;top:1019px;width:1px;height:4px;background:#333"></div><div class="t" style="left:200px;top:1021px;font-size:11px;color:#3d4d30">18:19:00</div><div class="a" style="left:305px;top:1019px;width:1px;height:4px;background:#333"></div><div class="t" style="left:293px;top:1021px;font-size:11px;color:#3d4d30">18:19:30</div><div class="a" style="left:398px;top:1019px;width:1px;height:4px;background:#333"></div><div class="t" style="left:386px;top:1021px;font-size:11px;color:#3d4d30">18:20:00</div><div class="a" style="left:491px;top:1019px;width:1px;height:4px;background:#333"></div><div class="t" style="left:479px;top:1021px;font-size:11px;color:#3d4d30">18:20:30</div><div class="a" style="left:584px;top:1019px;width:1px;height:4px;background:#333"></div><div class="t" style="left:572px;top:1021px;font-size:11px;color:#3d4d30">18:21:00</div><div class="a" style="left:677px;top:1019px;width:1px;height:4px;background:#333"></div><div class="t" style="left:665px;top:1021px;font-size:11px;color:#3d4d30">18:21:30</div><div class="a" style="left:770px;top:1019px;width:1px;height:4px;background:#333"></div><div class="t" style="left:758px;top:1021px;font-size:11px;color:#3d4d30">18:22:00</div><div class="a" style="left:863px;top:1019px;width:1px;height:4px;background:#333"></div><div class="t" style="left:851px;top:1021px;font-size:11px;color:#3d4d30">18:22:30</div><div class="a" style="left:956px;top:1019px;width:1px;height:4px;background:#333"></div><div class="t" style="left:944px;top:1021px;font-size:11px;color:#3d4d30">18:23:00</div><div class="a" style="left:1049px;top:1019px;width:1px;height:4px;background:#333"></div><div class="t" style="left:1037px;top:1021px;font-size:11px;color:#3d4d30">18:23:30</div><div class="a" style="left:1142px;top:1019px;width:1px;height:4px;background:#333"></div><div class="t" style="left:1130px;top:1021px;font-size:11px;color:#3d4d30">18:24:00</div><div class="a" style="left:1235px;top:1019px;width:1px;height:4px;background:#333"></div><div class="t" style="left:1223px;top:1021px;font-size:11px;color:#3d4d30">18:24:30</div><div class="a" style="left:1328px;top:1019px;width:1px;height:4px;background:#333"></div><div class="t" style="left:1316px;top:1021px;font-size:11px;color:#3d4d30">18:25:00</div><div class="a" style="left:1421px;top:1019px;width:1px;height:4px;background:#333"></div><div class="t" style="left:1409px;top:1021px;font-size:11px;color:#3d4d30">18:25:30</div><div class="a" style="left:1514px;top:1019px;width:1px;height:4px;background:#333"></div><div class="t" style="left:1502px;top:1021px;font-size:11px;color:#3d4d30">18:26:00</div><div class="a" style="left:1607px;top:1019px;width:1px;height:4px;background:#333"></div><div class="t" style="left:1595px;top:1021px;font-size:11px;color:#3d4d30">18:26:30</div><div class="a" style="left:1700px;top:1019px;width:1px;height:4px;background:#333"></div><div class="t" style="left:1688px;top:1021px;font-size:11px;color:#3d4d30">18:27:00</div><div class="a" style="left:1793px;top:1019px;width:1px;height:4px;background:#333"></div><div class="t" style="left:1781px;top:1021px;font-size:11px;color:#3d4d30">18:27:30</div><div class="a" style="left:1885px;top:1019px;width:1px;height:4px;background:#333"></div><div class="t" style="left:1873px;top:1021px;width:17px;overflow:hidden;font-size:11px;color:#3d4d30">18:28:00</div><div class="a" style="left:0;top:1040px;width:1920px;height:40px;background:#050403"></div><div class="a" style="left:0;top:1039px;width:1920px;height:1px;border-top:1px dashed #666"></div><svg class="a" style="left:0;top:1040px" width="1920" height="40">
<defs>
<linearGradient id="wp" x1="0" y1="0" x2="1" y2="0"><stop offset="0" stop-color="#000"/><stop offset="0.6" stop-color="#060403"/><stop offset="0.85" stop-color="#0d0a07"/><stop offset="1" stop-color="#050403"/></linearGradient>
</defs>
<rect x="0" y="0" width="1920" height="40" fill="url(#wp)"/>
<!-- start -->
<path d="M16 13.2L23.2 12.2V19.4H16Z M24.2 12L32 11V19.4H24.2Z M16 20.4H23.2V27.6L16 26.6Z M24.2 20.4H32V28.8L24.2 27.8Z" fill="#fff"/>
<!-- search -->
<circle cx="74.2" cy="17.6" r="5.3" fill="none" stroke="#fff" stroke-width="1.2"/>
<path d="M70.4 21.4L64.2 27.6" stroke="#fff" stroke-width="1.3"/>
<!-- task view -->
<rect x="114.5" y="13.5" width="11" height="13" fill="none" stroke="#fff" stroke-width="1.1"/>
<path d="M112.5 16H110.5V24H112.5 M127.5 16H129.5V24H127.5" fill="none" stroke="#fff" stroke-width="1.1"/>
<!-- explorer folder -->
<path d="M160 11.5H167.5L169 13H181.5V28.5H160Z" fill="#f2c961"/>
<path d="M160 14.5H181.5V28.5H160Z" fill="#fbe08e"/>
<path d="M163.5 23.5H177.5V28.8H175V26.3H166V28.8H163.5Z" fill="#2a9ce0"/>
<!-- perfmon -->
<path d="M210 15L212 13.5V26L210 26.5Z" fill="#8a9aa8"/>
<rect x="212.5" y="12" width="18" height="14" rx="1" fill="#c9d3da"/>
<rect x="214" y="13.5" width="15" height="11" fill="#dff0fb"/>
<path d="M214.5 21L217 19.5L218.5 16L220 22L221.5 18L223 20L225 17L226.5 21L228.5 20" fill="none" stroke="#3a8fd8" stroke-width="0.9"/>
<ellipse cx="221.5" cy="30" rx="5" ry="2" fill="#b4bcc2"/>
<rect x="220" y="26" width="3" height="3" fill="#a4acb2"/>
<g transform="translate(0,-4)"><!-- control panel-like -->
<rect x="258.5" y="16" width="21" height="15" fill="#3aa8e8"/>
<path d="M264 20.2 A3.2 3.2 0 1 0 267.2 23.4H264Z" fill="#e8f4fc"/>
<path d="M265 19.2V22.4H268.2A3.2 3.2 0 0 0 265 19.2Z" fill="#f4b83a"/>
<path d="M270 20H273M273.5 21.5H277M273.5 23.5H277M273.5 25.5H277" stroke="#e8f4fc" stroke-width="1"/>
<rect x="261" y="28" width="4" height="1" fill="#f4b83a"/>
</g><g transform="translate(0,-4)"><!-- cmd -->
<rect x="306.5" y="14.5" width="21" height="18" fill="#000" stroke="#c8c8c8" stroke-width="1"/>
<rect x="306.5" y="14.5" width="21" height="2" fill="#c8c8c8"/>
<text x="308.5" y="24" font-family="Liberation Mono" font-size="6" fill="#ddd">C:\</text>
<path d="M319 25.5H325" stroke="#fff" stroke-width="1"/>
</g><g transform="translate(0,-1.5)"><!-- paint -->
<path d="M356 24C354 19 360 15 366 16C372 17 374 22 370 26C367 29 364 27 362 29C359 31 357 28 356 24Z" fill="#dce8f0"/>
<circle cx="359" cy="23" r="1.3" fill="#e84a3a"/>
<circle cx="362.5" cy="19.5" r="1.3" fill="#5ac83a"/>
<circle cx="367" cy="18.7" r="1.3" fill="#f0c83a"/>
<circle cx="365" cy="24.5" r="1.2" fill="#111"/>
<path d="M362 33L372 14" stroke="#d89848" stroke-width="1.6"/>
<path d="M370.5 15L373 11L375 13Z" fill="#e8c898"/>
</g><g transform="translate(0,-1.5)"><!-- teamspeak -->
<path d="M406 13C412 10 420 12 423 19C426 27 420 33 412 33C416 31 421 27 419 20C417 15 411 13 406 13Z" fill="#2e4a6a"/>
<path d="M408 13C414 13 418 18 417 24C416 29 412 31 408 31C412 27 413 19 408 13Z" fill="#a8b8cc"/>
<path d="M404 16C408 17 410 22 408 27C406 30 404 28 405 25C403 22 402 19 404 16Z" fill="#3a5070"/>
<circle cx="405" cy="22" r="2" fill="#3ab84a"/>
</g><!-- chrome --><g transform="translate(0.5,-2.2)">
<circle cx="464.5" cy="22" r="11" fill="#db4437"/>
<path d="M464.5 22L455 27.5A11 11 0 0 0 464.5 33Z" fill="#0f9d58"/>
<path d="M464.5 22L454.97 16.5A11 11 0 0 0 455 27.5L460 30.5Z" fill="#0f9d58"/>
<path d="M464.5 22H475.5A11 11 0 0 1 464.5 33L460 30.5Z" fill="#ffcd40"/>
<circle cx="464.5" cy="22" r="5" fill="#fff"/>
<circle cx="464.5" cy="22" r="4" fill="#4285f4"/>

<g transform="translate(0,-4)"></g><rect x="445" y="38" width="40" height="2" fill="#f7d8b8"/><!-- calc -->
<rect x="505" y="12" width="18" height="23.5" fill="#fff"/>
<rect x="507.5" y="14.5" width="13" height="3" fill="#000"/>
<path d="M508 20H510M512 20H514M516 20H518M508 23.5H510M512 23.5H514M516 23.5H518M508 27H510M512 27H514M516 27H518M508 30.5H510M512 30.5H514M516 30.5H518" stroke="#000" stroke-width="1.6"/>
</g><g transform="translate(0,-3)"><!-- opera -->
<ellipse cx="562.7" cy="23" rx="11" ry="11" fill="#d01a2a"/>
<ellipse cx="562.7" cy="23" rx="4.5" ry="8" fill="#000"/>
</g><g transform="translate(0,-3)"><!-- firefox -->
<circle cx="611.7" cy="23" r="11" fill="#f07a1a"/>
<circle cx="613" cy="21" r="8" fill="#2a6ac8"/>
<path d="M602 20C603 28 610 32 616 31C621 30 623 26 623 22C620 27 614 28 610 25C607 23 606 19 608 17C604 17 602 18 602 20Z" fill="#f4a42a"/>
<path d="M606 14C610 12 616 13 619 15C614 14 609 15 606 18Z" fill="#f4c03a"/>
</g><!-- mail -->
<path d="M648.5 17L660.5 10L672.5 17V29.5H648.5Z" fill="#fff"/>
<path d="M648.5 17L672.5 17L663 24L660.5 21L672.5 28" fill="none" stroke="#000" stroke-width="1.4"/>
<!-- pingplotter active -->
<rect x="686" y="0" width="48" height="40" fill="#3c3b3a"/>
<rect x="686" y="38" width="48" height="2" fill="#f7d8b8"/>
<g transform="translate(0,-3.5)"><rect x="698" y="11" width="24" height="24" rx="3" fill="#1a8ed8"/>
<path d="M698 16H704V18.5H698Z" fill="#e8663a"/><path d="M698 18.5H704V21H698Z" fill="#f6c43a"/><path d="M698 21H703.5V23.5H698Z" fill="#7cc04a"/><path d="M698 23.5H703V26H698Z" fill="#2ab0e8"/>
<circle cx="713" cy="19" r="4.8" fill="#fff"/>
<path d="M701 34C704 30 706 26 708 25C711 27 716 27 720 25C717 29 712 30 708 29L705 34Z" fill="#fff"/>
</g><!-- tray -->
<path d="M1723.5 22.5L1729 17L1734.5 22.5" fill="none" stroke="#fff" stroke-width="1.1"/>
<rect x="1748.5" y="15" width="12" height="9" fill="none" stroke="#fff" stroke-width="1"/>
<rect x="1745.5" y="14.5" width="4.5" height="4.5" fill="#000" stroke="#fff" stroke-width="1"/>
<path d="M1746.5 19.5V27.5M1754.5 24V26.5M1751 26.5H1758" stroke="#fff" stroke-width="1"/>
<text x="1772" y="24" font-family="Liberation Sans" font-size="11.5" fill="#fff" textLength="22" lengthAdjust="spacingAndGlyphs">РУС</text>
<text x="1834" y="14.5" font-family="Liberation Sans" font-size="11.5" fill="#fff" text-anchor="middle">18:28</text>
<text x="1834" y="33" font-family="Liberation Sans" font-size="11.5" fill="#fff" text-anchor="middle" textLength="54" lengthAdjust="spacingAndGlyphs">29.10.2017</text>
<path d="M1879.5 13.5H1894.5V26.5H1889.5L1887 29L1884.5 26.5H1879.5Z" fill="none" stroke="#fff" stroke-width="1.1"/>
<rect x="1915" y="0" width="1" height="40" fill="#444"/>
</svg>
</body></html>
